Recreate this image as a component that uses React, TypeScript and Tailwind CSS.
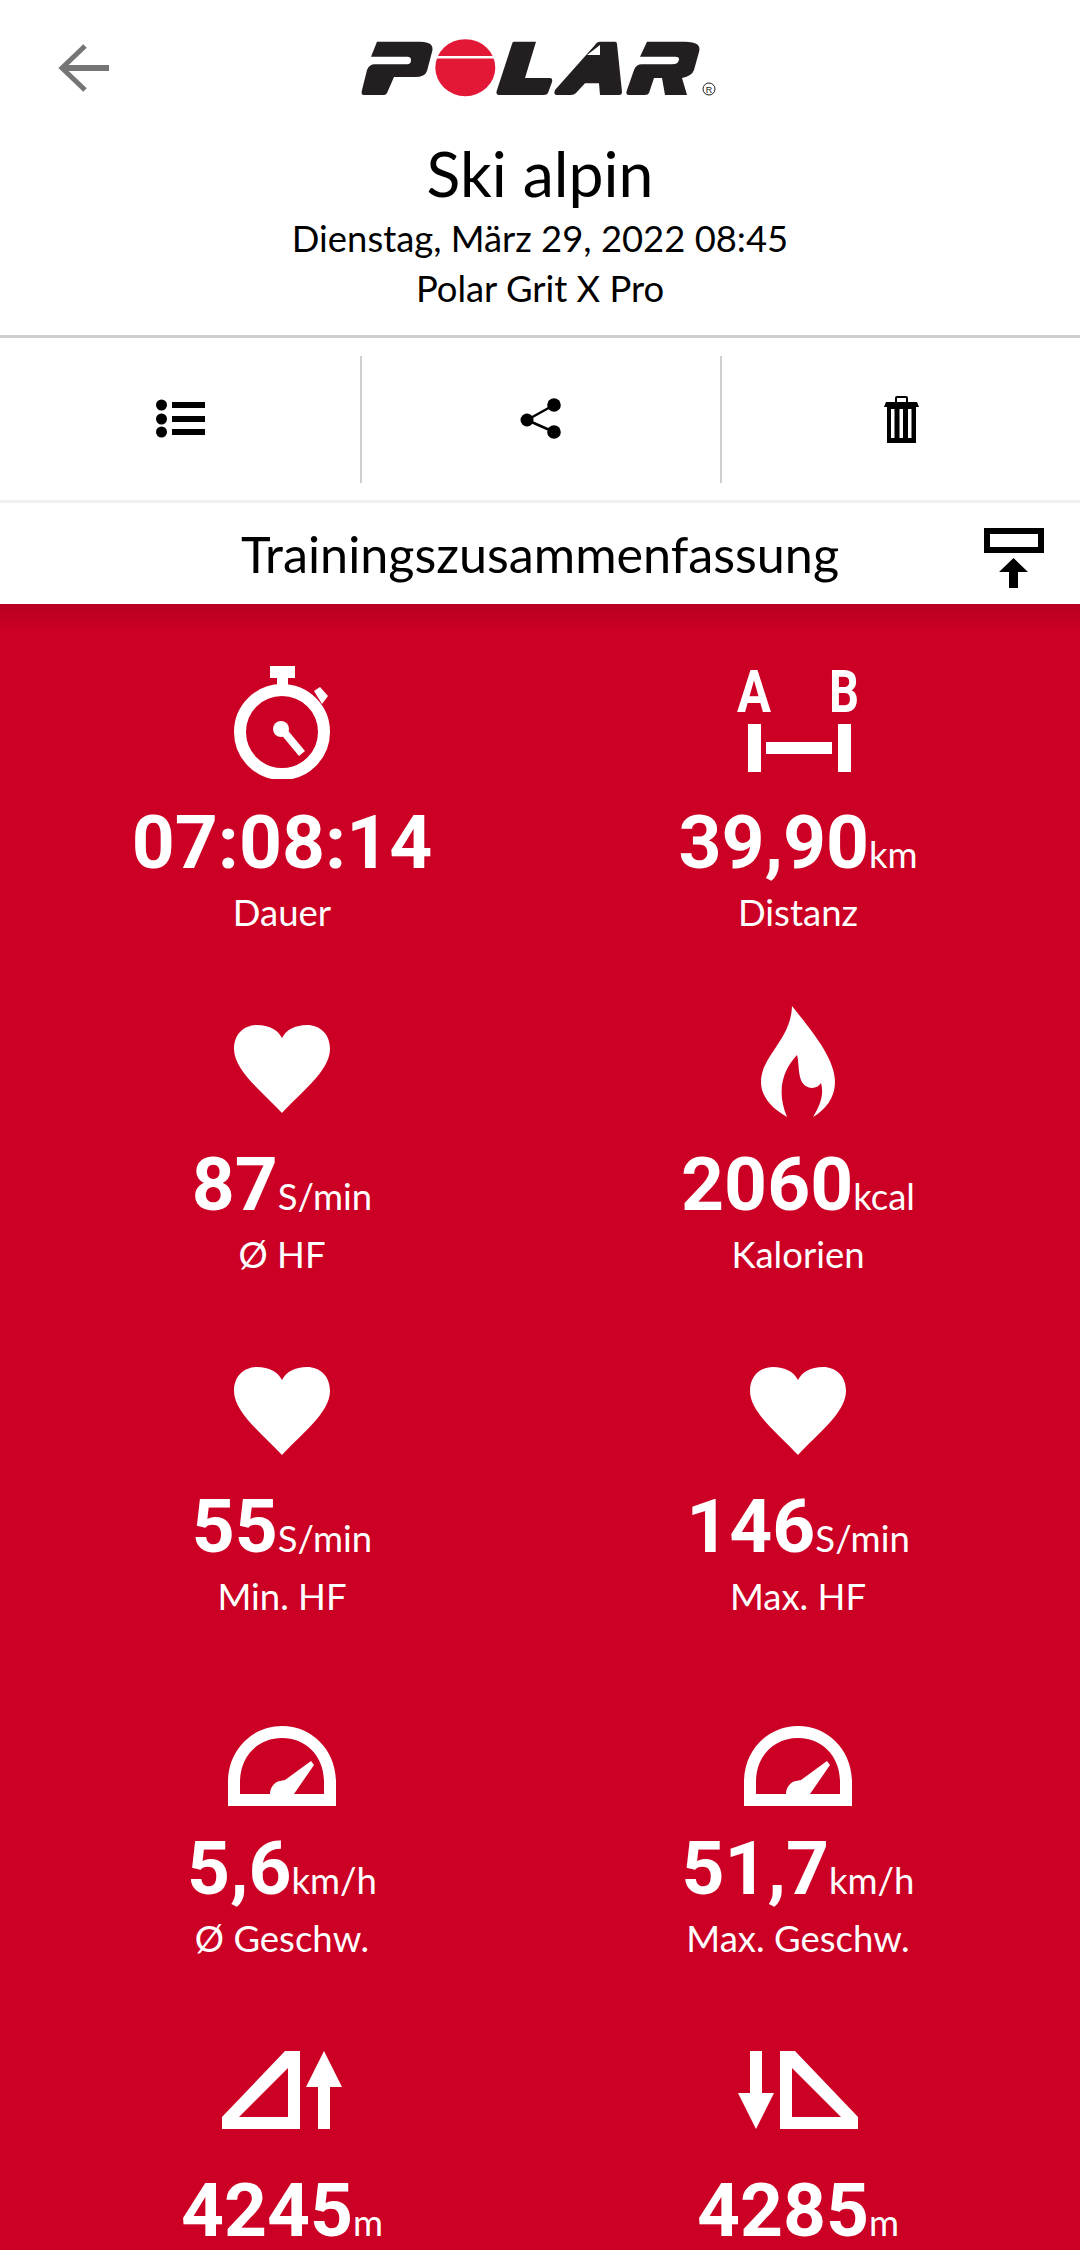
import type { ReactNode } from "react";

const bodyFont = "font-['Lato','Noto_Sans',sans-serif]";

function BackArrow() {
  return (
    <svg width="52" height="48" viewBox="0 0 52 48" fill="none" stroke="#757575">
      <path d="M27 2 L4 24 L27 46" strokeWidth="5" />
      <path d="M4 24 H51" strokeWidth="6" />
    </svg>
  );
}

function PolarLogo() {
  return (
    <svg width="365" height="62" viewBox="0 0 365 62">
      <g fill="#231f20">
        <path d="M20 3.7 H63 Q78 3.7 75 14 L70 33 Q68 39 58 39 H37 L30 55 Q29 57 27 57 H7 Q3.5 57 5 52 L10 32 Q12 26.3 18 26.3 H50 Q54 26.3 54 22 Q54 18.7 50 18.7 H14 Z" />
        <path d="M157 3.7 H179 L168 40 H193 Q196 40 195 44 L191 55 Q190 57 187 57 H143 Q138 57 140 52 L155 6 Q155.500 3.700 157 3.700 Z" />
        <path fillRule="evenodd" d="M243 3.700 H258 Q260 3.700 260 6 L265 54 Q265 57 262 57 H243 L242 45.300 H228 L219 55 Q217 57 214 57 H200 Q196 57 198 52 L238 7 Q240 3.700 243 3.700 Z M243 7 L230 17 H243 Z" />
        <path d="M290 3.700 H328 Q345 3.700 342 14 L337 32 Q335 38 325 40 L330 57 H308 L305 40 H297 L292 55 Q291 57 288 57 H272 Q268 57 270 52 L277 32 Q279 26.300 285 26.300 H315 Q322 26.300 322 21 Q322 18.700 318 18.700 H283 Z" />
      </g>
      <ellipse cx="108.300" cy="29.700" rx="30" ry="28.500" fill="#e31837" />
      <rect x="76" y="18" width="66" height="2.500" fill="#fff" />
      <circle cx="352" cy="51" r="6" fill="none" stroke="#231f20" strokeWidth="1" />
      <text x="352" y="54.500" textAnchor="middle" fontFamily="Liberation Sans" fontSize="9" fill="#231f20">R</text>
    </svg>
  );
}

function Stopwatch() {
  return (
    <svg width="96" height="113" viewBox="0 0 96 113" fill="#fff">
      <rect x="36" y="0" width="25" height="12" />
      <rect x="43" y="12" width="11" height="8" />
      <path d="M80 25 L86 21 L94 30 L88 38 Z" />
      <circle cx="48" cy="66" r="42" fill="none" stroke="#fff" strokeWidth="12" />
      <circle cx="47" cy="63" r="8" />
      <path d="M45 66 L51 61 L71 85 L65 90 Z" />
    </svg>
  );
}

function Distance() {
  return (
    <svg width="130" height="124" viewBox="-4 -20 130 124" fill="#fff" className="-mt-[20px]">
      <text x="0" y="42" fontFamily="Roboto" fontWeight="700" fontSize="59" textLength="34" lengthAdjust="spacingAndGlyphs">A</text>
      <text x="92" y="42" fontFamily="Roboto" fontWeight="700" fontSize="59" textLength="30" lengthAdjust="spacingAndGlyphs">B</text>
      <rect x="11" y="54" width="13" height="48" />
      <rect x="29" y="72" width="66" height="12" />
      <rect x="101" y="54" width="13" height="48" />
    </svg>
  );
}

function Heart() {
  return (
    <svg width="96" height="88" viewBox="0 0 96 88" fill="#fff">
      <path d="M48 88 C30 68 0 46 0 24 C0 9 10 0 23 0 C35 0 44 5 48 13 C52 5 61 0 73 0 C86 0 96 9 96 24 C96 46 66 68 48 88 Z" />
    </svg>
  );
}

function Flame() {
  return (
    <svg width="74" height="112" viewBox="0 0 74 112" fill="#fff">
      <path d="M31 0 C50 24 74 52 74 76 C74 92 64 104 52 111 C60 98 63 88 60 77 C56 84 44 84 40 74 C37 66 38 56 36 49 C24 62 14 82 26 111 C10 102 0 90 0 76 C0 50 30 34 31 0 Z" />
    </svg>
  );
}

function Gauge() {
  return (
    <svg width="108" height="80" viewBox="0 0 108 80" fill="#fff">
      <path fillRule="evenodd" d="M0 80 V56 C0 24 24 0 54 0 C84 0 108 24 108 56 V80 Z M12 68 H42 C42 62 46 56 52 55 L57 54 L83 35 L86 39 L66 68 H96 V56 C96 30 78 12 54 12 C30 12 12 30 12 56 Z" />
    </svg>
  );
}

function Ascent() {
  return (
    <svg width="120" height="78" viewBox="0 0 120 78" fill="#fff">
      <path fillRule="evenodd" d="M78 0 V78 H0 V66 L63 0 Z M66 17 L17 66 H66 Z" />
      <path d="M102 0 L120 36 H108 V78 H96 V36 H84 Z" />
    </svg>
  );
}

function Descent() {
  return (
    <svg width="120" height="78" viewBox="0 0 120 78" fill="#fff">
      <path fillRule="evenodd" d="M42 0 V78 H120 V66 L57 0 Z M54 17 L103 66 H54 Z" />
      <path d="M18 78 L36 42 H24 V0 H12 V42 H0 Z" />
    </svg>
  );
}

function CollapseIcon() {
  return (
    <svg width="60" height="60" viewBox="0 0 60 60">
      <rect x="3" y="3" width="54" height="19" fill="none" stroke="#000" strokeWidth="6" />
      <path d="M29.500 30 L44 44 H34 V60 H25 V44 H15 Z" fill="#000" />
    </svg>
  );
}

function ListIcon() {
  return (
    <svg width="50" height="40" viewBox="0 0 50 40" fill="#000" className="ml-[2px]">
      <circle cx="5.500" cy="6" r="5.500" />
      <circle cx="5.500" cy="20" r="5.500" />
      <circle cx="5.500" cy="33" r="5.500" />
      <rect x="16" y="3" width="33" height="6" />
      <rect x="16" y="17" width="33" height="6" />
      <rect x="16" y="30" width="33" height="6" />
    </svg>
  );
}

function ShareIcon() {
  return (
    <svg width="42" height="42" viewBox="0 0 42 42" fill="#000">
      <circle cx="7" cy="22" r="6.500" />
      <circle cx="34" cy="7" r="6.800" />
      <circle cx="34" cy="34" r="6.800" />
      <path d="M7 22 L34 7 M7 22 L34 34" stroke="#000" strokeWidth="2.500" />
    </svg>
  );
}

function TrashIcon() {
  return (
    <svg width="35" height="47" viewBox="0 0 35 47" fill="#000">
      <path d="M12 6 V2 Q12 1 13 1 H22 Q23 1 23 2 V6" fill="none" stroke="#000" strokeWidth="2" />
      <path d="M2 6 H33 L35 11 H0 Z" />
      <path fillRule="evenodd" d="M3 11 H32 V47 H3 Z M7 13 V42 H10.500 V13 Z M15.500 13 V42 H19 V13 Z M24 13 V42 H27.500 V13 Z" />
    </svg>
  );
}

type Stat = { icon: ReactNode; value: string; unit?: string; label?: string };

const stats: Stat[] = [
  { icon: <Stopwatch />, value: "07:08:14", label: "Dauer" },
  { icon: <Distance />, value: "39,90", unit: "km", label: "Distanz" },
  { icon: <div className="mt-[10px]"><Heart /></div>, value: "87", unit: "S/min", label: "Ø HF" },
  { icon: <div className="-mt-[4px]"><Flame /></div>, value: "2060", unit: "kcal", label: "Kalorien" },
  { icon: <div className="mt-[10px]"><Heart /></div>, value: "55", unit: "S/min", label: "Min. HF" },
  { icon: <div className="mt-[10px]"><Heart /></div>, value: "146", unit: "S/min", label: "Max. HF" },
  { icon: <div className="mt-[35px]"><Gauge /></div>, value: "5,6", unit: "km/h", label: "Ø Geschw." },
  { icon: <div className="mt-[35px]"><Gauge /></div>, value: "51,7", unit: "km/h", label: "Max. Geschw." },
  { icon: <Ascent />, value: "4245", unit: "m" },
  { icon: <Descent />, value: "4285", unit: "m" },
];

function StatCell({ stat }: { stat: Stat }) {
  return (
    <div className="flex h-[342px] flex-col items-center text-white">
      <div className="flex h-[118px] items-center justify-center">{stat.icon}</div>
      <div className="mt-[23px] flex h-[76px] items-baseline font-['Roboto',sans-serif]">
        <span className="text-[75px] leading-[76px] font-bold">{stat.value}</span>
        {stat.unit && <span className="text-[36.5px] font-['Lato',sans-serif]">{stat.unit}</span>}
      </div>
      {stat.label && <div className={`mt-[10px] text-[36.5px] leading-[44px] ${bodyFont}`}>{stat.label}</div>}
    </div>
  );
}

export default function App() {
  return (
    <div className={`flex h-[2250px] w-[1080px] flex-col overflow-hidden bg-white text-black ${bodyFont}`}>
      <header className="relative flex h-[338px] shrink-0 flex-col items-center border-b-[3px] border-[#cfcfcf] pt-[38px]">
        <div className="absolute top-[44px] left-[58px]">
          <BackArrow />
        </div>
        <div className="ml-[-175px] translate-x-[87px]">
          <PolarLogo />
        </div>
        <h1 className="mt-[38px] text-[62.5px] leading-[70px] font-normal">Ski alpin</h1>
        <p className="mt-[5px] text-[36.4px] leading-[50px]">Dienstag, März 29, 2022 08:45</p>
        <p className="text-[36.4px] leading-[50px]">Polar Grit X Pro</p>
      </header>

      <div className="grid h-[165px] shrink-0 grid-cols-3 items-center border-b-[3px] border-[#f0f0f0]">
        <div className="flex h-[127px] items-center justify-center">
          <ListIcon />
        </div>
        <div className="flex h-[127px] items-center justify-center border-l-2 border-[#cfcfcf]">
          <ShareIcon />
        </div>
        <div className="flex h-[127px] items-center justify-center border-l-2 border-[#cfcfcf]">
          <TrashIcon />
        </div>
      </div>

      <div className="relative flex h-[101px] shrink-0 items-center justify-center">
        <h2 className="text-[50.3px] font-normal">Trainingszusammenfassung</h2>
        <div className="absolute top-[25px] right-[36px]">
          <CollapseIcon />
        </div>
      </div>

      <div className="shrink-0 bg-[#cc0025] bg-[linear-gradient(#b80020,#cc0025_30px)] px-[24px] pt-[59px]">
        <div className="grid grid-cols-2">
          {stats.map((stat) => (
            <StatCell key={stat.value} stat={stat} />
          ))}
        </div>
      </div>
    </div>
  );
}
